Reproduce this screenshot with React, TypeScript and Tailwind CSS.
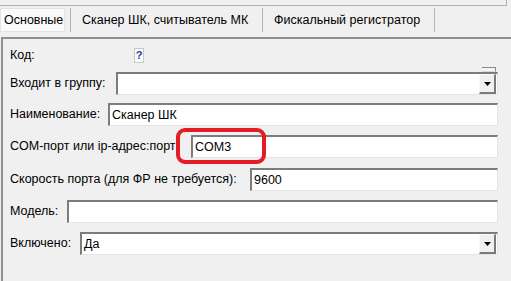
import type { ReactNode } from "react";

const font = { fontFamily: '"Liberation Sans", Arial, sans-serif' };

function DropButton() {
  return (
    <div className="mr-[1px] flex h-[20px] w-[17px] items-center justify-center border-t border-l border-t-[#f8f8f8] border-l-[#f8f8f8] border-r-2 border-b-2 border-r-[#7a7a7a] border-b-[#7a7a7a] bg-[#f0f0f0]">
      <svg width="7" height="4" viewBox="0 0 7 4">
        <path d="M0 0h7L3.5 4z" fill="#000" />
      </svg>
    </div>
  );
}

function Input({ value, drop, className }: { value?: string; drop?: boolean; className: string }) {
  return (
    <div
      className={`flex h-[23px] items-center border-t-2 border-l-2 border-t-[#7c7c7c] border-l-[#7c7c7c] border-r border-b border-r-[#e3e3e3] border-b-[#e3e3e3] bg-white ${className}`}
    >
      <span className="flex-1 pl-[2px] text-[12.5px] leading-none text-black">{value}</span>
      {drop && <DropButton />}
    </div>
  );
}

function Row({ label, w, children, mt }: { label: string; w: string; children: ReactNode; mt: string }) {
  return (
    <div className={`flex h-[23px] items-center ${mt}`}>
      <span className={`shrink-0 text-[12.5px] whitespace-nowrap text-black ${w}`}>{label}</span>
      {children}
    </div>
  );
}

export default function App() {
  return (
    <div className="h-[281px] w-[511px] overflow-hidden bg-[#f0f0f0]" style={font}>
      <div className="h-[6px] w-[507px] border-r border-b border-[#b0b0b0]" />

      {/* tabs */}
      <div className="flex h-[31px] items-start pt-[2px]">
        <div className="flex h-[24px] w-[65px] items-center border border-[#e4e4e4] bg-[#fafafa] pl-[3px] text-[12.5px] text-black">
          Основные
        </div>
        <div className="ml-[5px] h-[24px] w-px bg-[#b4b4b4]" />
        <div className="flex h-[24px] w-[191px] items-center pl-[11px] text-[12.5px] whitespace-nowrap text-black">
          Сканер ШК, считыватель МК
        </div>
        <div className="h-[24px] w-px bg-[#b4b4b4]" />
        <div className="flex h-[24px] w-[171px] items-center pl-[11px] text-[12.5px] whitespace-nowrap text-black">
          Фискальный регистратор
        </div>
        <div className="h-[24px] w-px bg-[#b4b4b4]" />
      </div>

      {/* panel */}
      <div className="relative ml-[1px] h-[260px] border-t-2 border-l-2 border-t-[#8f8f8f] border-l-[#8f8f8f] pl-[7px]">
        <div className="mt-[8px] flex h-[16px] items-center">
          <span className="w-[124px] text-[12.5px] text-black">Код:</span>
          <div className="flex h-[15px] w-[10px] items-center justify-center border border-[#c8c8c8] bg-[#fbfbfb] text-[11px] font-bold leading-none text-[#1a3cb0]">
            ?
          </div>
        </div>

        <div className="relative">
          <div className="absolute -top-[5px] left-[472px] h-[5px] w-[14px] border-t border-r border-b border-t-[#8a8a8a] border-r-[#8a8a8a] border-b-[#d8d8d8] bg-[#f4f4f4]" />
          <Row label="Входит в группу:" w="w-[106px]" mt="mt-[9px]">
            <Input drop className="w-[382px]" />
          </Row>
        </div>
        <Row label="Наименование:" w="w-[98px]" mt="mt-[8px]">
          <Input value="Сканер ШК" className="w-[390px]" />
        </Row>
        <Row label="COM-порт или ip-адрес:порт:" w="w-[181px]" mt="mt-[9px]">
          <Input value="COM3" className="w-[307px]" />
        </Row>
        <Row label="Скорость порта (для ФР не требуется):" w="w-[240px]" mt="mt-[10px]">
          <Input value="9600" className="w-[248px]" />
        </Row>
        <Row label="Модель:" w="w-[57px]" mt="mt-[9px]">
          <Input className="w-[431px]" />
        </Row>
        <Row label="Включено:" w="w-[70px]" mt="mt-[9px]">
          <Input value="Да" drop className="w-[418px]" />
        </Row>

        {/* red annotation */}
        <div className="absolute top-[89px] left-[173px] h-[36px] w-[90px] rounded-[9px] border-[4px] border-[#e41c24]" />
      </div>
    </div>
  );
}
